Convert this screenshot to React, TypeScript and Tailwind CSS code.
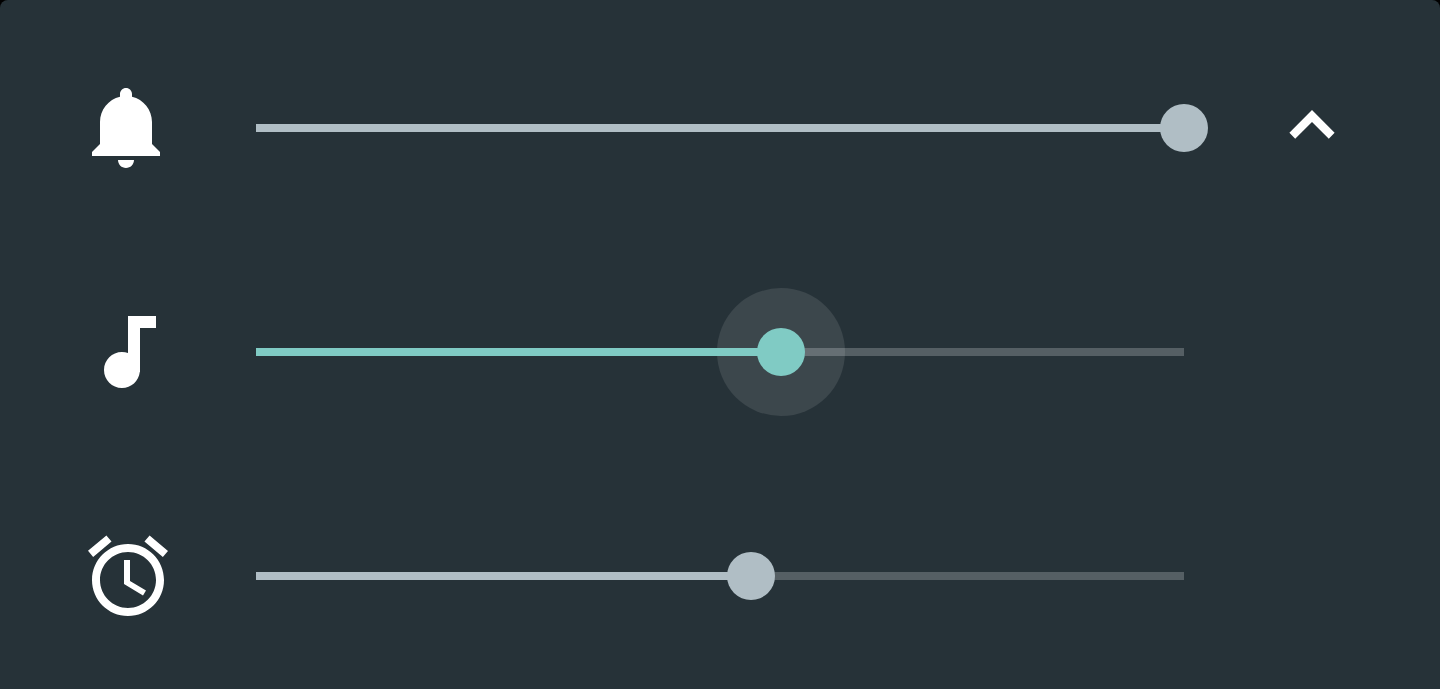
import { useState } from "react";

type StreamId = "notifications" | "media" | "alarm";

interface Stream {
  id: StreamId;
  label: string;
  initial: number;
  path: string;
}

// Volume levels run from 0 to 1000.
const MAX_LEVEL = 1000;

const streams: Stream[] = [
  {
    id: "notifications",
    label: "Notification volume",
    initial: 1000,
    path: "M11.5 22c1.1 0 2-.9 2-2h-4c0 1.1.9 2 2 2zm6.5-6v-5.5c0-3.07-2.13-5.64-5-6.32V3.5c0-.83-.67-1.5-1.5-1.5S10 2.67 10 3.5v.68c-2.87.68-5 3.25-5 6.32V16l-2 2v1h17v-1l-2-2z",
  },
  {
    id: "media",
    label: "Media volume",
    initial: 566,
    path: "M12 3v9.28c-.47-.17-.97-.28-1.5-.28C8.01 12 6 14.01 6 16.5S8.01 21 10.5 21c2.31 0 4.2-1.75 4.45-4H15V6h4V3h-7z",
  },
  {
    id: "alarm",
    label: "Alarm volume",
    initial: 533,
    path: "M22 5.72l-4.6-3.86-1.29 1.53 4.6 3.86L22 5.72zM7.88 3.39L6.6 1.86 2 5.71l1.29 1.53 4.59-3.85zM12.5 8H11v6l4.75 2.85.75-1.23-4-2.37V8zM12 4c-4.97 0-9 4.03-9 9s4.02 9 9 9c4.97 0 9-4.03 9-9s-4.03-9-9-9zm0 16c-3.87 0-7-3.13-7-7s3.13-7 7-7 7 3.13 7 7-3.13 7-7 7z",
  },
];

interface SliderProps {
  id: string;
  value: number;
  active: boolean;
  onActivate: () => void;
  onChange: (value: number) => void;
}

function VolumeSlider({ id, value, active, onActivate, onChange }: SliderProps) {
  const percent = `${(value / MAX_LEVEL) * 100}%`;
  return (
    <div className="relative flex h-12 min-w-0 flex-1 items-center">
      {/* The track is inset by half a thumb on each side. */}
      <div className="pointer-events-none absolute inset-x-6 h-2 bg-[#555f64]">
        {active && (
          <div
            className="absolute top-1/2 size-32 -translate-x-1/2 -translate-y-1/2 rounded-full bg-white/10"
            style={{ left: percent }}
          />
        )}
        <div
          className={`relative h-full ${active ? "bg-[#80cbc4]" : "bg-[#b0bec5]"}`}
          style={{ width: percent }}
        />
      </div>
      <input
        id={id}
        type="range"
        min={0}
        max={MAX_LEVEL}
        value={value}
        onPointerDown={onActivate}
        onFocus={onActivate}
        onChange={(event) => onChange(Number(event.target.value))}
        className={`relative m-0 h-12 w-full cursor-pointer appearance-none bg-transparent outline-none [&::-webkit-slider-thumb]:size-12 [&::-webkit-slider-thumb]:appearance-none [&::-webkit-slider-thumb]:rounded-full [&::-moz-range-thumb]:size-12 [&::-moz-range-thumb]:rounded-full [&::-moz-range-thumb]:border-0 ${
          active
            ? "[&::-webkit-slider-thumb]:bg-[#80cbc4] [&::-moz-range-thumb]:bg-[#80cbc4]"
            : "[&::-webkit-slider-thumb]:bg-[#b0bec5] [&::-moz-range-thumb]:bg-[#b0bec5]"
        }`}
      />
    </div>
  );
}

export default function App() {
  const [levels, setLevels] = useState<Record<StreamId, number>>({
    notifications: streams[0].initial,
    media: streams[1].initial,
    alarm: streams[2].initial,
  });
  const [activeId, setActiveId] = useState<StreamId>("media");
  const [expanded, setExpanded] = useState(true);
  const visible = expanded ? streams : streams.slice(0, 1);

  return (
    <div className="min-h-screen bg-black">
      <main className="min-h-screen rounded-t-lg bg-[#263238] pt-4">
        {visible.map((stream, index) => (
          <div key={stream.id} className="flex h-56 items-center gap-14 px-20">
            <label htmlFor={stream.id} aria-label={stream.label} className="shrink-0">
              <svg viewBox="0 0 24 24" className="size-24 fill-white" aria-hidden="true">
                <path d={stream.path} />
              </svg>
            </label>
            <VolumeSlider
              id={stream.id}
              value={levels[stream.id]}
              active={activeId === stream.id}
              onActivate={() => setActiveId(stream.id)}
              onChange={(value) => setLevels((prev) => ({ ...prev, [stream.id]: value }))}
            />
            <div className="size-24 shrink-0">
              {index === 0 && (
                <button
                  type="button"
                  aria-label={expanded ? "Collapse" : "Expand"}
                  aria-expanded={expanded}
                  onClick={() => setExpanded(!expanded)}
                  className="flex size-24 cursor-pointer items-center justify-center"
                >
                  <svg
                    viewBox="0 0 48 48"
                    className={`size-12 fill-white ${expanded ? "" : "rotate-180"}`}
                    aria-hidden="true"
                  >
                    <path d="M24 6L46.6 28.8L40.8 34.7L24 18L7.2 34.7L1.4 28.8Z" />
                  </svg>
                </button>
              )}
            </div>
          </div>
        ))}
      </main>
    </div>
  );
}
